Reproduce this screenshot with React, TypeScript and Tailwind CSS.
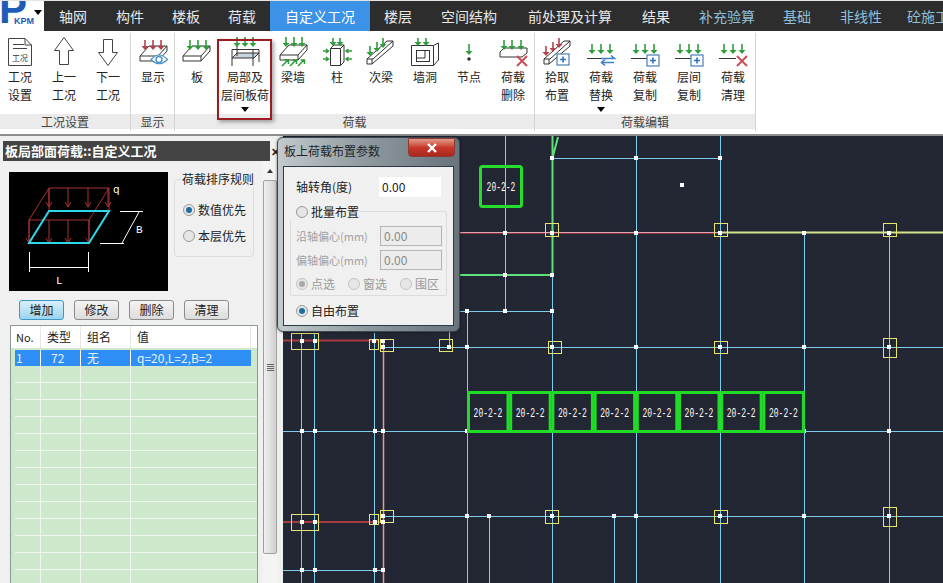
import React from 'react';

const GREEN = '#2f9e3a';
const RED = '#b5414a';
const BLUE = '#4a7fb5';

const tabs = [
  { name: '轴网', w: 'w-[58px]' },
  { name: '构件', w: 'w-[56px]' },
  { name: '楼板', w: 'w-[56px]' },
  { name: '荷载', w: 'w-[56px]' },
  { name: '自定义工况', w: 'w-[100px]', active: true },
  { name: '楼层', w: 'w-[56px]' },
  { name: '空间结构', w: 'w-[86px]' },
  { name: '前处理及计算', w: 'w-[116px]' },
  { name: '结果', w: 'w-[56px]' },
  { name: '补充验算', w: 'w-[86px]', blue: true },
  { name: '基础', w: 'w-[54px]', blue: true },
  { name: '非线性', w: 'w-[74px]', blue: true },
  { name: '砼施工', w: 'w-[60px]', blue: true },
];

// arrow pointing down, drawn in page coordinates
const Down = ({ x, y, h = 10, c = GREEN }: { x: number; y: number; h?: number; c?: string }) => (
  <g>
    <path d={`M${x} ${y}V${y + h - 3}`} stroke={c} strokeWidth="1.6" />
    <path d={`M${x - 3.5} ${y + h - 4}H${x + 3.5}L${x} ${y + h}Z`} fill={c} />
  </g>
);

const Cross = ({ x, y }: { x: number; y: number }) => (
  <path d={`M${x - 5} ${y - 5}L${x + 5} ${y + 5}M${x + 5} ${y - 5}L${x - 5} ${y + 5}`} stroke="#c8505a" strokeWidth="2" />
);

const PlusBox = ({ x, y }: { x: number; y: number }) => (
  <g>
    <rect x={x} y={y} width="12" height="11" fill="#fff" stroke={BLUE} strokeWidth="1.2" />
    <path d={`M${x + 6} ${y + 2.5}V${y + 8.5}M${x + 3} ${y + 5.5}H${x + 9}`} stroke="#2f6fc0" strokeWidth="1.6" />
  </g>
);

const Plate = ({ x, y }: { x: number; y: number }) => (
  <g fill="none" stroke="#333" strokeWidth="1">
    <path d={`M${x} ${y + 10}L${x + 9} ${y}H${x + 27}L${x + 18} ${y + 10}ZM${x} ${y + 10}V${y + 15}H${x + 18}L${x + 27} ${y + 5}V${y}M${x + 18} ${y + 10}V${y + 15}`} fill="#fff" />
  </g>
);

const Beam = ({ x, y }: { x: number; y: number }) => (
  <g fill="#fff" stroke="#333" strokeWidth="1">
    <path d={`M${x} ${y + 18}L${x + 20} ${y}H${x + 26}L${x + 6} ${y + 18}ZM${x} ${y + 18}V${y + 23}H${x + 5}L${x + 26} ${y + 5}V${y}M${x + 5} ${y + 18}V${y + 23}`} />
  </g>
);

const LoadLine = ({ x }: { x: number }) => (
  <g>
    <Down x={x} y={44} />
    <Down x={x + 9} y={44} />
    <Down x={x + 18} y={44} />
    <path d={`M${x - 5} 58.5H${x + 12}`} stroke="#333" />
  </g>
);

const icons: Record<string, React.ReactNode> = {
  case: (
    <g>
      <path d="M8.5 38.5H25L31.5 45V65.5H8.5Z" fill="#fff" stroke="#444" />
      <path d="M25 38.5V45H31.5M13 44.5H24M13 48.5H27" fill="none" stroke="#444" />
      <text x="20" y="61" textAnchor="middle" fontSize="8" fill="#333">工况</text>
    </g>
  ),
  up: <path d="M64 37.5L73.5 50.5H68.5V64.5H59.5V50.5H54.5Z" fill="#fff" stroke="#444" />,
  down: <path d="M108 65.5L117.5 52.5H112.5V39.5H103.5V52.5H98.5Z" fill="#fff" stroke="#444" />,
  show: (
    <g>
      <Plate x={139} y={46} />
      <Down x={144} y={40} c={RED} />
      <Down x={152} y={40} c={RED} />
      <Down x={160} y={40} c={RED} />
      <path d="M150 59.5Q158 50.5 166.5 59.5Q158 68 150 59.5Z" fill="#fff" stroke="#4a90c8" strokeWidth="1.2" />
      <circle cx="158" cy="59.5" r="3" fill="none" stroke="#4a90c8" strokeWidth="1.4" />
    </g>
  ),
  plate: (
    <g>
      <Plate x={182} y={46} />
      <Down x={189} y={40} />
      <Down x={197} y={40} />
      <Down x={205} y={40} />
    </g>
  ),
  local: (
    <g>
      <path d="M231 58L236 53H258L253 58Z" fill="#c9d4e2" stroke="#333" />
      <path d="M231 49.5H258M231 49.5V66M258 49.5V62M236 45V56M252 49.5V66" fill="none" stroke="#333" />
      <Down x={236} y={37} />
      <Down x={244} y={37} />
      <Down x={252} y={37} />
    </g>
  ),
  wall: (
    <g>
      <Plate x={279} y={45} />
      <Down x={285} y={37} />
      <Down x={293} y={37} />
      <Down x={301} y={37} />
      <path d="M281 66L287 60M289 66L295 60M297 66L303 60M283.5 60H287.5V64M291.5 60H295.5V64M299.5 60H303.5V64" fill="none" stroke={GREEN} strokeWidth="1.5" />
    </g>
  ),
  column: (
    <g>
      <path d="M329.5 48.5L333 45H343V62L339.5 65.5H329.5ZM329.5 48.5H339.5V65.5M339.5 48.5L343 45" fill="#fff" stroke="#333" />
      <Down x={332} y={38} h={8} />
      <Down x={339} y={38} h={8} />
      <path d="M322 51H327M325 49L327.5 51L325 53M322 59H327M325 57L327.5 59L325 61M351 51H345.5M347.5 49L345 51L347.5 53M351 59H345.5M347.5 57L345 59L347.5 61" fill="none" stroke={GREEN} strokeWidth="1.5" />
    </g>
  ),
  beam: (
    <g>
      <Beam x={366} y={41} />
      <Down x={369} y={46} />
      <Down x={376} y={42} />
      <Down x={382} y={38} />
    </g>
  ),
  hole: (
    <g>
      <path d="M410.5 45.5H432.5L437.5 43V60L432.5 65.5H410.5ZM432.5 45.5V65.5" fill="#fff" stroke="#333" />
      <rect x="415.5" y="50.5" width="13" height="11" fill="none" stroke="#333" />
      <path d="M415.5 58H424V50.5" fill="none" stroke="#333" />
      <Down x={417} y={38} h={8} />
      <Down x={425} y={38} h={8} />
    </g>
  ),
  node: (
    <g>
      <Down x={468} y={44} h={11} />
      <circle cx="468" cy="59" r="1.8" fill="#333" />
    </g>
  ),
  del: (
    <g>
      <path d="M499 52L503 48H526V53L521 57H499Z" fill="#fff" stroke="#333" />
      <Down x={503} y={40} />
      <Down x={511} y={40} />
      <Down x={520} y={40} />
      <Cross x={521} y={61} />
    </g>
  ),
  pick: (
    <g>
      <Beam x={543} y={41} />
      <Down x={545} y={46} c={RED} />
      <Down x={552} y={42} c={RED} />
      <Down x={558} y={38} c={RED} />
      <PlusBox x={556} y={54} />
    </g>
  ),
  replace: (
    <g>
      <LoadLine x={591} />
      <path d="M600 58.5H613M610 55.5L613.5 58.5H600" fill="none" stroke="#3f7fd0" strokeWidth="1.6" />
      <path d="M613 62.5H601M604 59.5L600.5 62.5L604 65.5" fill="none" stroke="#3f7fd0" strokeWidth="1.6" />
    </g>
  ),
  copy: (
    <g>
      <LoadLine x={635} />
      <PlusBox x={646} y={55} />
    </g>
  ),
  floor: (
    <g>
      <LoadLine x={679} />
      <PlusBox x={690} y={55} />
    </g>
  ),
  clear: (
    <g>
      <LoadLine x={723} />
      <Cross x={741} y={61} />
    </g>
  ),
};

type Btn = { id: string; x: number; lines: string[]; menu?: boolean; wide?: boolean };

const groups: { title: string; w: string; shift?: string; btns: Btn[] }[] = [
  {
    title: '工况设置',
    w: 'w-[131px]',
    shift: '-ml-[2px]',
    btns: [
      { id: 'case', x: -2, lines: ['工况', '设置'] },
      { id: 'up', x: 42, lines: ['上一', '工况'] },
      { id: 'down', x: 86, lines: ['下一', '工况'] },
    ],
  },
  { title: '显示', w: 'w-[44px]', btns: [{ id: 'show', x: 130, lines: ['显示'] }] },
  {
    title: '荷载',
    w: 'w-[360px]',
    btns: [
      { id: 'plate', x: 174, lines: ['板'] },
      { id: 'local', x: 218, lines: ['局部及', '层间板荷'], menu: true, wide: true },
      { id: 'wall', x: 270, lines: ['梁墙'] },
      { id: 'column', x: 314, lines: ['柱'] },
      { id: 'beam', x: 358, lines: ['次梁'] },
      { id: 'hole', x: 402, lines: ['墙洞'] },
      { id: 'node', x: 446, lines: ['节点'] },
      { id: 'del', x: 490, lines: ['荷载', '删除'] },
    ],
  },
  {
    title: '荷载编辑',
    w: 'w-[221px]',
    btns: [
      { id: 'pick', x: 534, lines: ['拾取', '布置'] },
      { id: 'replace', x: 578, lines: ['荷载', '替换'], menu: true },
      { id: 'copy', x: 622, lines: ['荷载', '复制'] },
      { id: 'floor', x: 666, lines: ['层间', '复制'] },
      { id: 'clear', x: 710, lines: ['荷载', '清理'] },
    ],
  },
];

const Radio = ({ on, dim, label }: { on?: boolean; dim?: boolean; label: string }) => (
  <div className={`flex items-center gap-[3px] whitespace-nowrap text-[12px] leading-[16px] ${dim ? 'text-[#9a9a9a]' : 'text-[#222]'}`}>
    <span className={`flex h-[12px] w-[12px] items-center justify-center rounded-full border ${dim ? 'border-[#c4c4c4]' : 'border-[#9a9a9a]'} bg-[#e6e6e6]`}>
      {on && <span className={`h-[6px] w-[6px] rounded-full ${dim ? 'bg-[#a8a8a8]' : 'bg-[#1f6f9c]'}`} />}
    </span>
    {label}
  </div>
);

const colW = ['w-[26px]', 'w-[40px]', 'w-[50px]', 'w-[120px]'];

const Preview = () => (
  <svg className="h-[119px] w-[159px] shrink-0 bg-black" viewBox="9 172 159 119">
    <g fill="none" stroke="#a83232" strokeWidth="1">
      <path d="M49 188H109L89 220H29ZM29 220V243M89 220V243M109 188V211M49 188V211" />
      {[49, 68, 88, 108, 29, 49, 68, 89].map((x, i) => {
        const y = i < 4 ? 188 : 220;
        const h = i < 4 ? 19 : 23;
        return <path key={i} d={`M${x} ${y}V${y + h}M${x - 3} ${y + h - 5}L${x} ${y + h}L${x + 3} ${y + h - 5}`} />;
      })}
    </g>
    <path d="M49 211H109L89 243H29Z" fill="none" stroke="#2fd8e8" strokeWidth="2" />
    <g fill="none" stroke="#fff" strokeWidth="1">
      <path d="M29.5 252V272M88.5 252V272M29.5 267.5H88.5M120 211.5H143M100 243.5H124M139 212L122 243" />
    </g>
    <g fill="#fff" fontSize="11" fontFamily="'Liberation Mono', monospace">
      <text x="113" y="193">q</text>
      <text x="136" y="233">B</text>
      <text x="56" y="284">L</text>
    </g>
  </svg>
);

const vLines: [number, number, number][] = [
  [301.5, 333, 583], [314.5, 333, 583], [374.5, 333, 583],
  [467.5, 311, 391], [467.5, 433, 583], [505.5, 136, 311], [552.5, 275, 583],
  [636.5, 136, 583], [720.5, 136, 583], [804.5, 233, 583], [889.5, 233, 583],
  [489.5, 516, 583], [614.5, 516, 583], [449.5, 330, 347],
];
const hLines: [number, number, number][] = [
  [158.5, 552, 720], [311.5, 460, 552], [347.5, 383, 943], [431.5, 283, 943],
  [516.5, 383, 943], [570.5, 283, 383],
];
const nodes: [number, number][] = [
  [552, 158], [636, 158], [720, 158],
  [505, 233], [552, 233], [636, 233], [720, 233], [804, 233], [889, 233],
  [505, 275], [552, 275], [467, 311], [505, 311], [552, 311],
  [302, 341], [315, 341], [374, 341], [383, 341],
  [383, 347], [449, 347], [467, 347], [552, 347], [636, 347], [720, 347], [804, 347], [889, 347],
  [302, 431], [315, 431], [375, 431], [383, 431], [467, 431], [552, 431], [636, 431], [720, 431], [804, 431], [889, 431],
  [302, 522], [315, 522], [375, 522], [383, 522],
  [383, 516], [467, 516], [489, 516], [552, 516], [614, 516], [636, 516], [720, 516], [804, 516], [889, 516],
  [302, 570], [315, 570], [375, 570], [383, 570], [682, 185],
];
const yellow: [number, number, number, number][] = [
  [291, 333, 27, 16], [369, 339, 9, 10], [380, 339, 13, 12], [439, 339, 13, 12], [548, 341, 13, 12],
  [291, 514, 27, 16], [369, 514, 9, 10], [380, 510, 13, 12], [545, 510, 13, 13],
  [545, 223, 13, 13], [714, 223, 13, 13], [883, 223, 13, 13], [714, 341, 13, 12], [883, 338, 13, 19],
  [714, 510, 13, 13], [883, 507, 13, 19],
];

// tall narrow CAD lettering: small mono font stretched upward
const Label = ({ x, y }: { x: number; y: number }) => (
  <text transform={`translate(${x} ${y}) scale(1 1.7)`} textAnchor="middle" fill="#fff" fontSize="8" fontFamily="'Liberation Mono', monospace">
    20-2-2
  </text>
);

const Canvas = () => (
  <svg className="h-[447px] w-[660px] shrink-0 bg-[#232733]" viewBox="283 136 660 447">
    <g stroke="#7fcdee" strokeWidth="1">
      {vLines.map(([x, a, b], i) => <path key={i} d={`M${x} ${a}V${b}`} />)}
      {hLines.map(([y, a, b], i) => <path key={i} d={`M${a} ${y}H${b}`} />)}
    </g>
    <path d="M283 340.5H383M283 522H383" stroke="#a83a40" strokeWidth="2" />
    <path d="M383.5 341V583" stroke="#e09a9a" strokeWidth="1.5" />
    <path d="M460 232.5H720" stroke="#d9a8b4" strokeWidth="1" />
    <path d="M460 233.5H720" stroke="#8c2f3a" strokeWidth="1" />
    <path d="M720 232.5H943" stroke="#d4e48a" strokeWidth="2" />
    <path d="M460 275H552M552.5 136V275M552.5 158L558 137" stroke="#5fe07a" strokeWidth="2" fill="none" />
    {yellow.map(([x, y, w, h], i) => (
      <rect key={i} x={x + 0.5} y={y + 0.5} width={w} height={h} fill="none" stroke="#e6e66e" />
    ))}
    {nodes.map(([x, y], i) => <rect key={i} x={x - 2} y={y - 2} width="4" height="4" fill="#fff" />)}
    <rect x="480.5" y="166.5" width="41" height="40" rx="2" fill="none" stroke="#26dc2c" strokeWidth="3" />
    <Label x={501} y={191} />
    {[0, 1, 2, 3, 4, 5, 6, 7].map((i) => (
      <g key={i}>
        <rect x={468.5 + i * 42.2} y="392.5" width="39.5" height="39" fill="#232733" stroke="#1fdc26" strokeWidth="3" />
        <Label x={488 + i * 42.2} y={417} />
      </g>
    ))}
  </svg>
);

const FieldInput = ({ dim }: { dim?: boolean }) => (
  <div className={`flex h-[20px] w-[62px] items-center pl-[3px] text-[12px] leading-[20px] ${dim ? 'border border-[#b4b4b4] bg-[#ececec] text-[#8a8a8a]' : 'bg-white text-[#222]'}`}>
    0.00
  </div>
);

const Dialog = () => (
  <div className="absolute left-[277px] top-[137px] flex h-[195px] w-[183px] flex-col rounded-[6px] border border-[#3c4650] bg-linear-to-r from-[#c2cacd] via-[#8d989e] to-[#68737c] px-[5px] pb-[5px] shadow-[0_0_3px_rgba(0,0,0,0.5)]">
    <div className="flex h-[28px] shrink-0 items-center justify-between pb-[3px]">
      <span className="pl-[1px] text-[12px] leading-[16px] text-[#1d262c]">板上荷载布置参数</span>
    </div>
    <div className="absolute right-[4px] top-0 flex h-[19px] w-[47px] items-center justify-center rounded-b-[4px] border border-[#8a3b34] bg-linear-to-b from-[#e09a88] via-[#c8382a] to-[#a8281e]">
      <svg width="12" height="10" viewBox="0 0 12 10">
        <path d="M2 1L10 9M10 1L2 9" stroke="#fff" strokeWidth="2.4" />
      </svg>
    </div>
    <div className="flex-1 border border-[#2b3a44] bg-[#f0f0f0] px-[6px] pt-[10px]">
      <div className="flex items-center justify-between pl-[6px] pr-[6px]">
        <span className="text-[12px] leading-[20px] text-[#222]">轴转角(度)</span>
        <FieldInput />
      </div>
      <div className="relative z-10 mt-[7px] flex h-[16px] w-fit items-center bg-[#f0f0f0] pl-[6px] pr-[1px]">
        <Radio label="批量布置" />
      </div>
      <div className="-mt-[9px] h-[85px] rounded-[2px] border border-[#dcdcdc] pl-[5px] pr-[4px] pt-[14px]">
        <div className="flex items-center justify-between">
          <span className="text-[11px] leading-[20px] text-[#a0a0a0]">沿轴偏心(mm)</span>
          <FieldInput dim />
        </div>
        <div className="mt-[4px] flex items-center justify-between">
          <span className="text-[11px] leading-[20px] text-[#a0a0a0]">偏轴偏心(mm)</span>
          <FieldInput dim />
        </div>
        <div className="mt-[6px] flex gap-[13px]">
          <Radio on dim label="点选" />
          <Radio dim label="窗选" />
          <Radio dim label="围区" />
        </div>
      </div>
      <div className="mt-[7px] pl-[6px]">
        <Radio on label="自由布置" />
      </div>
    </div>
  </div>
);

export default function App() {
  return (
    <div className="relative flex h-[583px] w-[943px] flex-col overflow-hidden bg-white font-['Noto_Sans_CJK_SC','Liberation_Sans',sans-serif] text-[#333]">
      {/* tab bar */}
      <div className="flex h-[31px] shrink-0 items-stretch overflow-hidden border-t border-[#e4e4e4] bg-[#2d2d2d]">
        <div className="relative w-[44px] shrink-0 overflow-hidden bg-white">
          <span className="absolute -left-[1px] -top-[13px] text-[42px] font-bold leading-[42px] text-[#1f5cb8] [font-family:'Liberation_Sans',sans-serif]">P</span>
          <span className="absolute left-[13px] top-[16px] bg-white pl-[1px] text-[9px] font-bold leading-[8px] text-[#1f5cb8] [font-family:'Liberation_Sans',sans-serif]">KPM</span>
          <span className="absolute left-[34px] top-[9px] h-0 w-0 border-x-[4px] border-t-[5px] border-x-transparent border-t-black" />
        </div>
        {tabs.map((t) => (
          <div
            key={t.name}
            className={`flex shrink-0 items-center justify-center whitespace-nowrap text-[14px] ${t.w} ${t.active ? 'bg-[#3c92e6] text-white' : t.blue ? 'text-[#8fc0dc]' : 'text-[#e8e8e8]'}`}
          >
            {t.name}
          </div>
        ))}
      </div>

      {/* ribbon */}
      <div className="flex h-[103px] shrink-0 bg-white pt-[2px]">
        {groups.map((g) => (
          <div key={g.title} className={`flex h-[98px] shrink-0 flex-col border-r border-[#d4d4d4] ${g.w}`}>
            <div className={`flex h-[81px] ${g.shift ?? ''}`}>
              {g.btns.map((b) => (
                <div key={b.id} className={`flex shrink-0 flex-col items-center ${b.wide ? 'w-[52px]' : 'w-[44px]'}`}>
                  <svg className="mt-[1px] h-[34px] shrink-0" width={b.wide ? 52 : 44} viewBox={`${b.x} 34 ${b.wide ? 52 : 44} 34`}>
                    {icons[b.id]}
                  </svg>
                  {b.lines.map((l) => (
                    <span key={l} className="whitespace-nowrap text-[12px] leading-[18px] text-[#222]">{l}</span>
                  ))}
                  {b.menu && <span className="mt-[3px] h-0 w-0 border-x-[4px] border-t-[5px] border-x-transparent border-t-black" />}
                </div>
              ))}
            </div>
            <div className="flex h-[15px] items-center justify-center bg-[#ebebeb] text-[12px] text-[#444]">{g.title}</div>
          </div>
        ))}
      </div>
      <div className="h-[2px] shrink-0 bg-[#8f8f8f]" />

      {/* body */}
      <div className="flex min-h-0 flex-1">
        <div className="flex w-[283px] shrink-0 flex-col bg-[#f0f0f0] pt-[5px]">
          <div className="flex h-[20px] shrink-0 items-center">
            <div className="ml-[3px] flex h-full w-[267px] items-center bg-[#444] pl-[2px] text-[13px] font-bold leading-[20px] text-white">板局部面荷载::自定义工况</div>
            <span className="ml-[1px] text-[11px] font-bold leading-[20px] text-[#222]">✕</span>
          </div>
          <div className="flex min-h-0 flex-1">
            <div className="w-[263px] shrink-0 pl-[9px] pt-[11px]">
              <div className="flex">
                <Preview />
                <div className="ml-[6px] mt-[7px] h-[78px] w-[80px] rounded-[4px] border border-[#dcdcdc]">
                  <div className="-mt-[9px] ml-[7px] w-fit whitespace-nowrap bg-[#f0f0f0] text-[12px] leading-[16px] text-[#222]">荷载排序规则</div>
                  <div className="flex flex-col gap-[10px] pl-[8px] pt-[15px]">
                    <Radio on label="数值优先" />
                    <Radio label="本层优先" />
                  </div>
                </div>
              </div>
              <div className="ml-[10px] mt-[9px] flex gap-[10px]">
                {['增加', '修改', '删除', '清理'].map((b, i) => (
                  <div
                    key={b}
                    className={`flex h-[20px] w-[45px] items-center justify-center rounded-[3px] border text-[12px] leading-[18px] text-[#222] ${i === 0 ? 'border-[#3c98c8] bg-linear-to-b from-[#d8f0fb] to-[#9cd4f0]' : 'border-[#8c8c8c] bg-linear-to-b from-[#f4f4f4] to-[#dcdcdc]'}`}
                  >
                    {b}
                  </div>
                ))}
              </div>
              <div className="ml-[1px] mt-[5px] h-[300px] w-[248px] overflow-hidden border border-[#8c9a96] bg-[#cde8cd] pl-[4px]">
                <div className="-ml-[4px] flex h-[22px] bg-white pl-[4px] text-[12px] text-[#222]">
                  {['No.', '类型', '组名', '值'].map((h, i) => (
                    <div key={h} className={`flex items-center border-r border-[#e6e6e6] ${colW[i]} ${i === 0 ? 'pl-[1px] text-[11px]' : 'pl-[6px]'}`}>
                      {h}
                    </div>
                  ))}
                </div>
                <div className="mt-[2px] flex h-[16px] w-[236px] bg-[#2f8ef5] text-[12px] leading-[16px] text-[#e8f3ff]">
                  <div className="w-[26px] border-r border-white pl-[1px]">1</div>
                  <div className="w-[40px] border-r border-white pl-[10px]">72</div>
                  <div className="w-[50px] border-r border-white pl-[6px]">无</div>
                  <div className="whitespace-nowrap pl-[6px]">q=20,L=2,B=2</div>
                </div>
                {Array.from({ length: 13 }).map((_, r) => (
                  <div key={r} className="flex h-[17px] border-b border-[#eef6ee]">
                    <div className="w-[26px] border-r border-[#eef6ee]" />
                    <div className="w-[40px] border-r border-[#eef6ee]" />
                    <div className="w-[50px] border-r border-[#eef6ee]" />
                    <div className="w-[120px]" />
                  </div>
                ))}
              </div>
            </div>
            {/* scrollbar */}
            <div className="flex w-[14px] shrink-0 flex-col bg-[#f4f4f4]">
              <div className="flex h-[19px] shrink-0 items-center justify-center">
                <span className="h-0 w-0 border-x-[3px] border-b-[4px] border-x-transparent border-b-[#333]" />
              </div>
              <div className="flex h-[374px] flex-col items-center justify-center gap-[1px] rounded-[2px] border border-[#a0a0a0] bg-linear-to-r from-[#f0f0f0] to-[#cfcfcf]">
                <span className="h-px w-[7px] bg-[#666]" />
                <span className="h-px w-[7px] bg-[#666]" />
                <span className="h-px w-[7px] bg-[#666]" />
                <span className="h-px w-[7px] bg-[#666]" />
              </div>
            </div>
          </div>
        </div>
        <Canvas />
      </div>

      <Dialog />

      {/* red highlight round the selected command */}
      <div className="pointer-events-none absolute left-[217px] top-[39px] h-[81px] w-[55px] border-2 border-[#9b1c22] shadow-[2px_2px_4px_rgba(0,0,0,0.35)]" />
    </div>
  );
}
